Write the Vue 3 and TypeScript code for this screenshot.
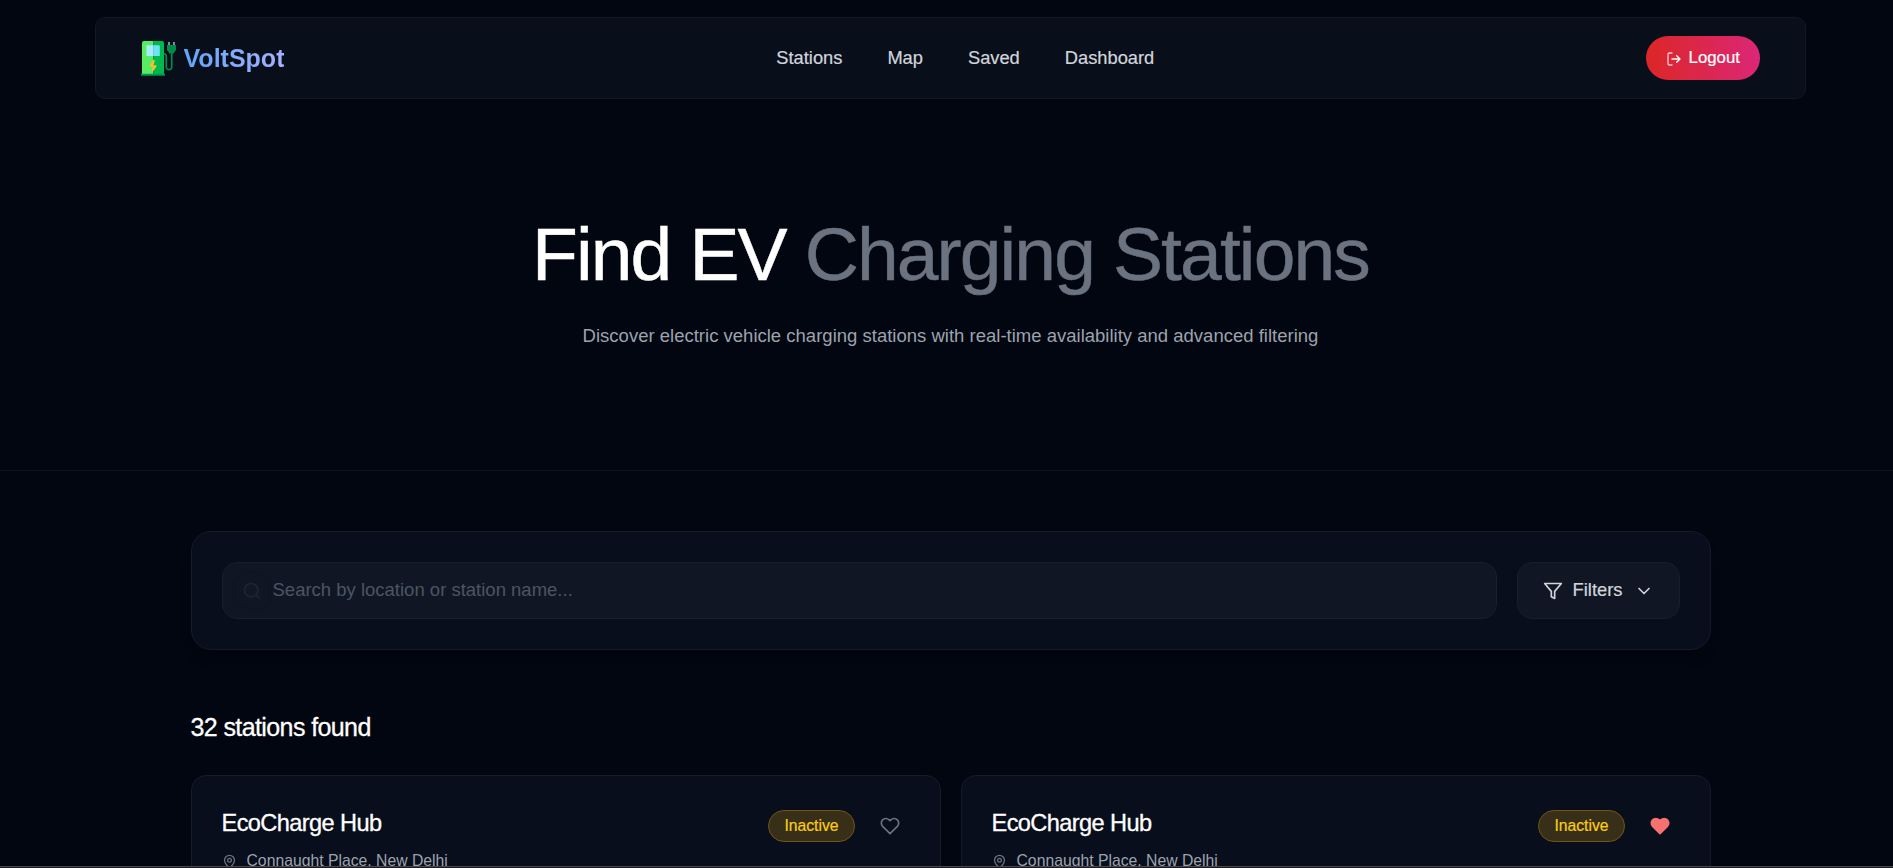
<script setup lang="ts">
import { ref } from "vue";

interface NavLink {
  label: string;
  href: string;
}

interface Station {
  id: number;
  name: string;
  address: string;
  status: string;
  saved: boolean;
}

const navLinks: NavLink[] = [
  { label: "Stations", href: "#stations" },
  { label: "Map", href: "#map" },
  { label: "Saved", href: "#saved" },
  { label: "Dashboard", href: "#dashboard" },
];

const totalStations = 32;
const searchQuery = ref("");
const stations = ref<Station[]>([
  { id: 1, name: "EcoCharge Hub", address: "Connaught Place, New Delhi", status: "Inactive", saved: false },
  { id: 2, name: "EcoCharge Hub", address: "Connaught Place, New Delhi", status: "Inactive", saved: true },
]);

const toggleSaved = (station: Station) => {
  station.saved = !station.saved;
};
</script>

<template>
  <div class="viewport">
    <div class="page">
      <!-- Navbar -->
      <header class="navbar">
        <a class="brand" href="#">
          <svg class="brand-icon" viewBox="0 0 36 36">
            <path d="M3 0h9.300v33H1V2a2 2 0 0 1 2-2z" fill="#5aeb65" />
            <path d="M12.300 0H21a2 2 0 0 1 2 2v31H12.300z" fill="#00b84c" />
            <path d="M6.400 4.300h5.900V15H5.400V5.300a1 1 0 0 1 1-1z" fill="#a5ecfa" />
            <path d="M12.300 4.300h5.500a1 1 0 0 1 1 1V15h-6.500z" fill="#6fe0f5" />
            <path d="M0 32.700h24v2H0z" fill="#009a51" />
            <path d="M12.600 18.700l1.200.5-1.300 5h3.100l-.3 1.600-3.600 4.900-1-.6 1.300-4.700H8.700l.2-1.500z" fill="#fdbf2f" />
            <path
              d="M23 12.500c1.600.2 2.300 1.300 2.300 3v11.500a3 3 0 0 0 5.400 0V12"
              fill="none"
              stroke="#008b49"
              stroke-width="1.700"
            />
            <path d="M28 1v3.500M33 1v3.500" stroke="#8ca3b5" stroke-width="1.700" />
            <path d="M26 4h9v5l-2.500 3.600h-4L26 9z" fill="#008b49" />
          </svg>
          <span class="brand-name">VoltSpot</span>
        </a>
        <nav class="nav-links">
          <a v-for="link in navLinks" :key="link.label" :href="link.href">{{ link.label }}</a>
        </nav>
        <button class="logout" type="button">
          <svg class="logout-icon" viewBox="0 0 24 24">
            <path d="M9 21H5a2 2 0 0 1-2-2V5a2 2 0 0 1 2-2h4" opacity="0.75" />
            <path d="M16 17l5-5-5-5M21 12H9" />
          </svg>
          <span>Logout</span>
        </button>
      </header>

      <!-- Hero -->
      <section class="hero">
        <h1 class="hero-title">Find EV <span>Charging Stations</span></h1>
        <p class="hero-subtitle">
          Discover electric vehicle charging stations with real-time availability and advanced filtering
        </p>
      </section>

      <main class="content">
        <!-- Search and filters -->
        <section class="search-panel">
          <label class="search-box">
            <svg class="search-icon" viewBox="0 0 24 24">
              <circle cx="11" cy="11" r="8" />
              <path d="M21 21l-4.300-4.300" />
            </svg>
            <input v-model="searchQuery" type="text" placeholder="Search by location or station name..." />
          </label>
          <button class="filters" type="button">
            <svg class="filter-icon" viewBox="0 0 24 24">
              <path d="M22 3H2l8 9.460V19l4 2v-8.540L22 3z" />
            </svg>
            <span>Filters</span>
            <svg class="chevron-icon" viewBox="0 0 24 24">
              <path d="M6 9l6 6 6-6" />
            </svg>
          </button>
        </section>

        <h2 class="results-title">{{ totalStations }} stations found</h2>

        <!-- Station cards -->
        <section class="station-grid">
          <article v-for="station in stations" :key="station.id" class="station-card">
            <div class="station-info">
              <h3 class="station-name">{{ station.name }}</h3>
              <p class="station-address">
                <svg class="pin-icon" viewBox="0 0 24 24">
                  <path d="M20 10c0 6-8 12-8 12s-8-6-8-12a8 8 0 0 1 16 0z" />
                  <circle cx="12" cy="10" r="3" />
                </svg>
                <span>{{ station.address }}</span>
              </p>
            </div>
            <div class="station-actions">
              <span class="status">{{ station.status }}</span>
              <button
                class="save"
                :class="{ 'is-saved': station.saved }"
                type="button"
                aria-label="Save station"
                @click="toggleSaved(station)"
              >
                <svg viewBox="0 0 24 24">
                  <path
                    d="M20.840 4.610a5.500 5.500 0 0 0-7.780 0L12 5.670l-1.060-1.060a5.500 5.500 0 0 0-7.780 7.780L12 21.230l8.840-8.840a5.500 5.500 0 0 0 0-7.780z"
                  />
                </svg>
              </button>
            </div>
          </article>
        </section>
      </main>
    </div>
    <div class="bottom-edge"></div>
  </div>
</template>

<style>
body {
  margin: 0;
  background: #020610;
}
</style>

<style scoped>
.viewport {
  display: flex;
  flex-direction: column;
  height: 868px;
  overflow: hidden;
  font-family: "Liberation Sans", Arial, sans-serif;
  color: #fff;
  background: #020610;
}

.page {
  width: 1901px;
  height: 866px;
  overflow: hidden;
}

.bottom-edge {
  box-sizing: border-box;
  height: 2px;
  border-top: 1px solid #48484a;
  background: #20191b;
}

svg {
  display: block;
  flex: none;
}

button {
  font-family: inherit;
  cursor: pointer;
}

h1,
h2,
h3,
p {
  margin: 0;
  font-weight: 400;
}

/* Navbar */
.navbar {
  box-sizing: border-box;
  display: flex;
  align-items: center;
  justify-content: space-between;
  width: 90%;
  height: 82px;
  margin: 17px auto 0;
  padding: 0 45px;
  border: 1px solid #121722;
  border-radius: 10px;
  background: #090e1b;
}

.brand {
  display: flex;
  align-items: center;
  gap: 6.5px;
  text-decoration: none;
}

.brand-icon {
  width: 36px;
  height: 36px;
  margin-top: 2px;
}

.brand-name {
  font-size: 25px;
  font-weight: 700;
  line-height: 32px;
  color: transparent;
  background: linear-gradient(to right, #60a5fa, #a5b4fc);
  background-clip: text;
}

.nav-links {
  display: flex;
  gap: 45px;
}

.nav-links a {
  font-size: 18.3px;
  color: #d1d5db;
  text-decoration: none;
  -webkit-text-stroke: 0.2px currentColor;
}

.logout {
  display: flex;
  align-items: center;
  gap: 6.5px;
  height: 44px;
  padding: 0 20px;
  border: 0;
  border-radius: 22px;
  font-size: 16.8px;
  color: #fff;
  background: linear-gradient(to right, #dc2626, #db2777);
  -webkit-text-stroke: 0.2px currentColor;
}

.logout-icon {
  width: 16px;
  height: 16px;
  margin-top: 1px;
  fill: none;
  stroke: #fff;
  stroke-width: 2;
  stroke-linecap: round;
  stroke-linejoin: round;
}

/* Hero */
.hero {
  box-sizing: border-box;
  height: 372px;
  padding-top: 115px;
  border-bottom: 1px solid #0d1420;
  text-align: center;
}

.hero-title {
  font-size: 75px;
  line-height: 80px;
  letter-spacing: -1.875px;
  -webkit-text-stroke: 0.5px currentColor;
}

.hero-title span {
  color: #6b7280;
}

.hero-subtitle {
  margin-top: 28px;
  font-size: 18.53px;
  line-height: 28px;
  color: #9ca3af;
}

/* Search */
.content {
  width: 1520px;
  margin: 60px auto 0;
}

.search-panel {
  box-sizing: border-box;
  display: flex;
  gap: 20px;
  height: 119px;
  padding: 30px;
  border: 1px solid #151b27;
  border-radius: 20px;
  background: #080e1b;
  box-shadow: 0 12px 15px -8px rgba(0, 0, 0, 0.35);
}

.search-box {
  box-sizing: border-box;
  display: flex;
  flex: 1;
  align-items: center;
  gap: 11px;
  padding: 0 19px;
  border: 1px solid #18202c;
  border-radius: 15px;
  background: #101623;
}

.search-box input {
  flex: 1;
  padding: 0 0 2px;
  border: 0;
  outline: 0;
  font-family: inherit;
  font-size: 18.5px;
  color: #fff;
  background: transparent;
}

.search-box input::placeholder {
  color: #4b5563;
}

.search-icon {
  width: 20px;
  height: 20px;
  margin-top: 1px;
  fill: none;
  stroke: #1e2433;
  stroke-width: 2;
  stroke-linecap: round;
  filter: drop-shadow(0 0 6px #1b2037);
}

.filters {
  box-sizing: border-box;
  display: flex;
  align-items: center;
  width: 163px;
  padding: 0 25px;
  border: 1px solid #16202b;
  border-radius: 15px;
  font-size: 18.4px;
  color: #d1d5db;
  background: #101623;
  -webkit-text-stroke: 0.2px currentColor;
}

.filters span {
  padding-bottom: 2px;
}

.filters svg {
  fill: none;
  stroke: currentColor;
  stroke-width: 2;
  stroke-linecap: round;
  stroke-linejoin: round;
}

.filter-icon {
  width: 20px;
  height: 20px;
  margin-right: 10px;
}

.chevron-icon {
  width: 20px;
  height: 20px;
  margin-left: 11px;
}

/* Results */
.results-title {
  margin-top: 60px;
  font-size: 25px;
  line-height: 35px;
  letter-spacing: -0.6px;
  -webkit-text-stroke: 0.3px currentColor;
}

.station-grid {
  display: grid;
  grid-template-columns: repeat(2, 1fr);
  gap: 20px;
  margin-top: 30px;
}

.station-card {
  box-sizing: border-box;
  display: flex;
  justify-content: space-between;
  height: 300px;
  padding: 30px;
  border: 1px solid #151b27;
  border-radius: 15px;
  background: #080e1b;
}

.station-name {
  font-size: 23.6px;
  line-height: 35px;
  letter-spacing: -0.6px;
  -webkit-text-stroke: 0.3px currentColor;
}

.station-address {
  display: flex;
  align-items: center;
  gap: 10px;
  margin-top: 10px;
  font-size: 15.75px;
  line-height: 20px;
  color: #9ca3af;
}

.pin-icon {
  width: 15px;
  height: 15px;
  fill: none;
  stroke: #6b7280;
  stroke-width: 2;
}

.station-actions {
  display: flex;
  align-items: flex-start;
  gap: 15px;
}

.status {
  box-sizing: border-box;
  height: 32px;
  margin-top: 4px;
  padding: 0 15px;
  border: 1px solid #705412;
  border-radius: 16px;
  font-size: 15.7px;
  line-height: 30px;
  color: #facc15;
  background: #382f19;
  -webkit-text-stroke: 0.2px currentColor;
}

.save {
  padding: 10px;
  border: 0;
  background: transparent;
}

.save svg {
  width: 20px;
  height: 20px;
  fill: none;
  stroke: #6b7280;
  stroke-width: 2;
  stroke-linecap: round;
  stroke-linejoin: round;
}

.save.is-saved svg {
  fill: #f87171;
  stroke: #f87171;
}
</style>
